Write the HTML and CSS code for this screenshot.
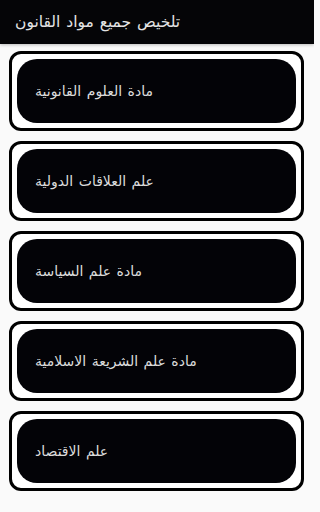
FILE: index.html
```html
<!DOCTYPE html>
<html lang="ar">
<head>
<meta charset="utf-8">
<link rel="stylesheet" href="styles.css">
</head>
<body>
<header class="appbar"><span class="title">تلخيص جميع مواد القانون</span></header>
<main class="list">
  <div class="card"><div class="inner"><span class="label">مادة العلوم القانونية</span></div></div>
  <div class="card"><div class="inner"><span class="label">علم العلاقات الدولية</span></div></div>
  <div class="card"><div class="inner"><span class="label">مادة علم السياسة</span></div></div>
  <div class="card"><div class="inner"><span class="label">مادة علم الشريعة الاسلامية</span></div></div>
  <div class="card"><div class="inner"><span class="label">علم الاقتصاد</span></div></div>
</main>
</body>
</html>
```
FILE: styles.css
```css
html, body {
  margin: 0;
  padding: 0;
}
body {
  width: 314px;
  height: 512px;
  background: #fafafa;
  font-family: "DejaVu Sans", "Noto Sans", sans-serif;
  overflow: hidden;
}
.appbar {
  height: 44px;
  background: #050507;
  display: flex;
  align-items: center;
  padding-left: 15px;
  box-shadow: 0 1px 3px rgba(0,0,0,0.25);
}
.title {
  color: #e4e4e4;
  font-size: 15.5px;
  word-spacing: 1px;
}
.list {
  display: flex;
  flex-direction: column;
  gap: 10px;
  padding: 7px 10px 0 9px;
}
.card {
  height: 80px;
  box-sizing: border-box;
  border: 3px solid #000;
  border-radius: 12px;
  padding: 5px;
  background: #fff;
}
.inner {
  height: 100%;
  background: #030307;
  border-radius: 20px;
  display: flex;
  align-items: center;
  padding-left: 18px;
}
.label {
  color: #dcdcdc;
  font-size: 14px;
  word-spacing: 1px;
}
```
